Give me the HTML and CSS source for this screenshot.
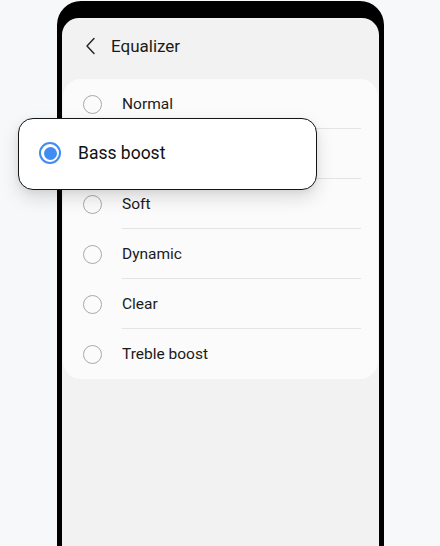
FILE: index.html
```html
<!DOCTYPE html>
<html>
<head>
<meta charset="utf-8">
<link rel="stylesheet" href="styles.css">
</head>
<body>
<div class="stage">
  <div class="phone">
    <div class="screen">
      <div class="header">
        <svg class="back" width="12" height="18" viewBox="0 0 12 18"><path d="M9 1.5 L2 9 L9 16.5" fill="none" stroke="#222" stroke-width="1.4" stroke-linecap="round" stroke-linejoin="round"/></svg>
        <span class="title">Equalizer</span>
      </div>
      <div class="card">
        <div class="row"><span class="radio"></span><span class="label">Normal</span></div>
        <div class="row"><span class="radio"></span><span class="label">Bass boost</span></div>
        <div class="row"><span class="radio"></span><span class="label">Soft</span></div>
        <div class="row"><span class="radio"></span><span class="label">Dynamic</span></div>
        <div class="row"><span class="radio"></span><span class="label">Clear</span></div>
        <div class="row last"><span class="radio"></span><span class="label">Treble boost</span></div>
      </div>
    </div>
  </div>
  <div class="popup">
    <span class="radio-on"><span class="dot"></span></span>
    <span class="popup-label">Bass boost</span>
  </div>
</div>
</body>
</html>
```
FILE: styles.css
```css
* { box-sizing: border-box; }
html, body { margin: 0; padding: 0; }
body {
  background: #f7f8fa;
  font-family: Roboto, "Noto Sans", sans-serif;
  width: 440px;
  height: 546px;
  overflow: hidden;
}
.stage {
  position: relative;
  width: 440px;
  height: 546px;
}
.phone {
  margin: 1px 0 0 57px;
  width: 327px;
  height: 545px;
  background: #000;
  border-radius: 24px 24px 0 0;
  padding: 17px 5px 0 5px;
}
.screen {
  background: #f2f2f2;
  height: 100%;
  border-radius: 17px 17px 0 0;
  padding: 0 1px;
}
.header {
  height: 61px;
  display: flex;
  align-items: center;
  padding-left: 22px;
  padding-bottom: 5px;
}
.back { display: block; }
.title {
  margin-left: 14px;
  font-size: 17px;
  color: #1a1a1a;
}
.card {
  background: #fbfbfb;
  border-radius: 18px;
  padding: 0 17px 0 20px;
}
.row {
  height: 50px;
  display: flex;
  align-items: center;
  position: relative;
}
.row::after {
  content: "";
  position: absolute;
  left: 39px;
  right: 0;
  bottom: 0;
  height: 1px;
  background: #e4e4e4;
}
.row.last::after { display: none; }
.radio {
  width: 19px;
  height: 19px;
  border-radius: 50%;
  border: 1.5px solid #a9a9a9;
  flex: none;
}
.label {
  margin-left: 20px;
  font-size: 15.5px;
  color: #1a1a1a;
}
.popup {
  position: absolute;
  left: 18px;
  top: 117px;
  width: 299px;
  height: 72px;
  background: #fff;
  border: 1.5px solid #151515;
  border-radius: 15px;
  box-shadow: 0 8px 18px rgba(0,0,0,0.13), 0 2px 6px rgba(0,0,0,0.06);
  display: flex;
  align-items: center;
  padding-left: 20px;
  padding-bottom: 2px;
}
.radio-on {
  width: 22px;
  height: 22px;
  border-radius: 50%;
  border: 2px solid #3f8cf3;
  display: flex;
  align-items: center;
  justify-content: center;
  flex: none;
}
.dot {
  width: 13px;
  height: 13px;
  border-radius: 50%;
  background: #3f8cf3;
}
.popup-label {
  margin-left: 17px;
  font-size: 17.5px;
  color: #111;
}
```
